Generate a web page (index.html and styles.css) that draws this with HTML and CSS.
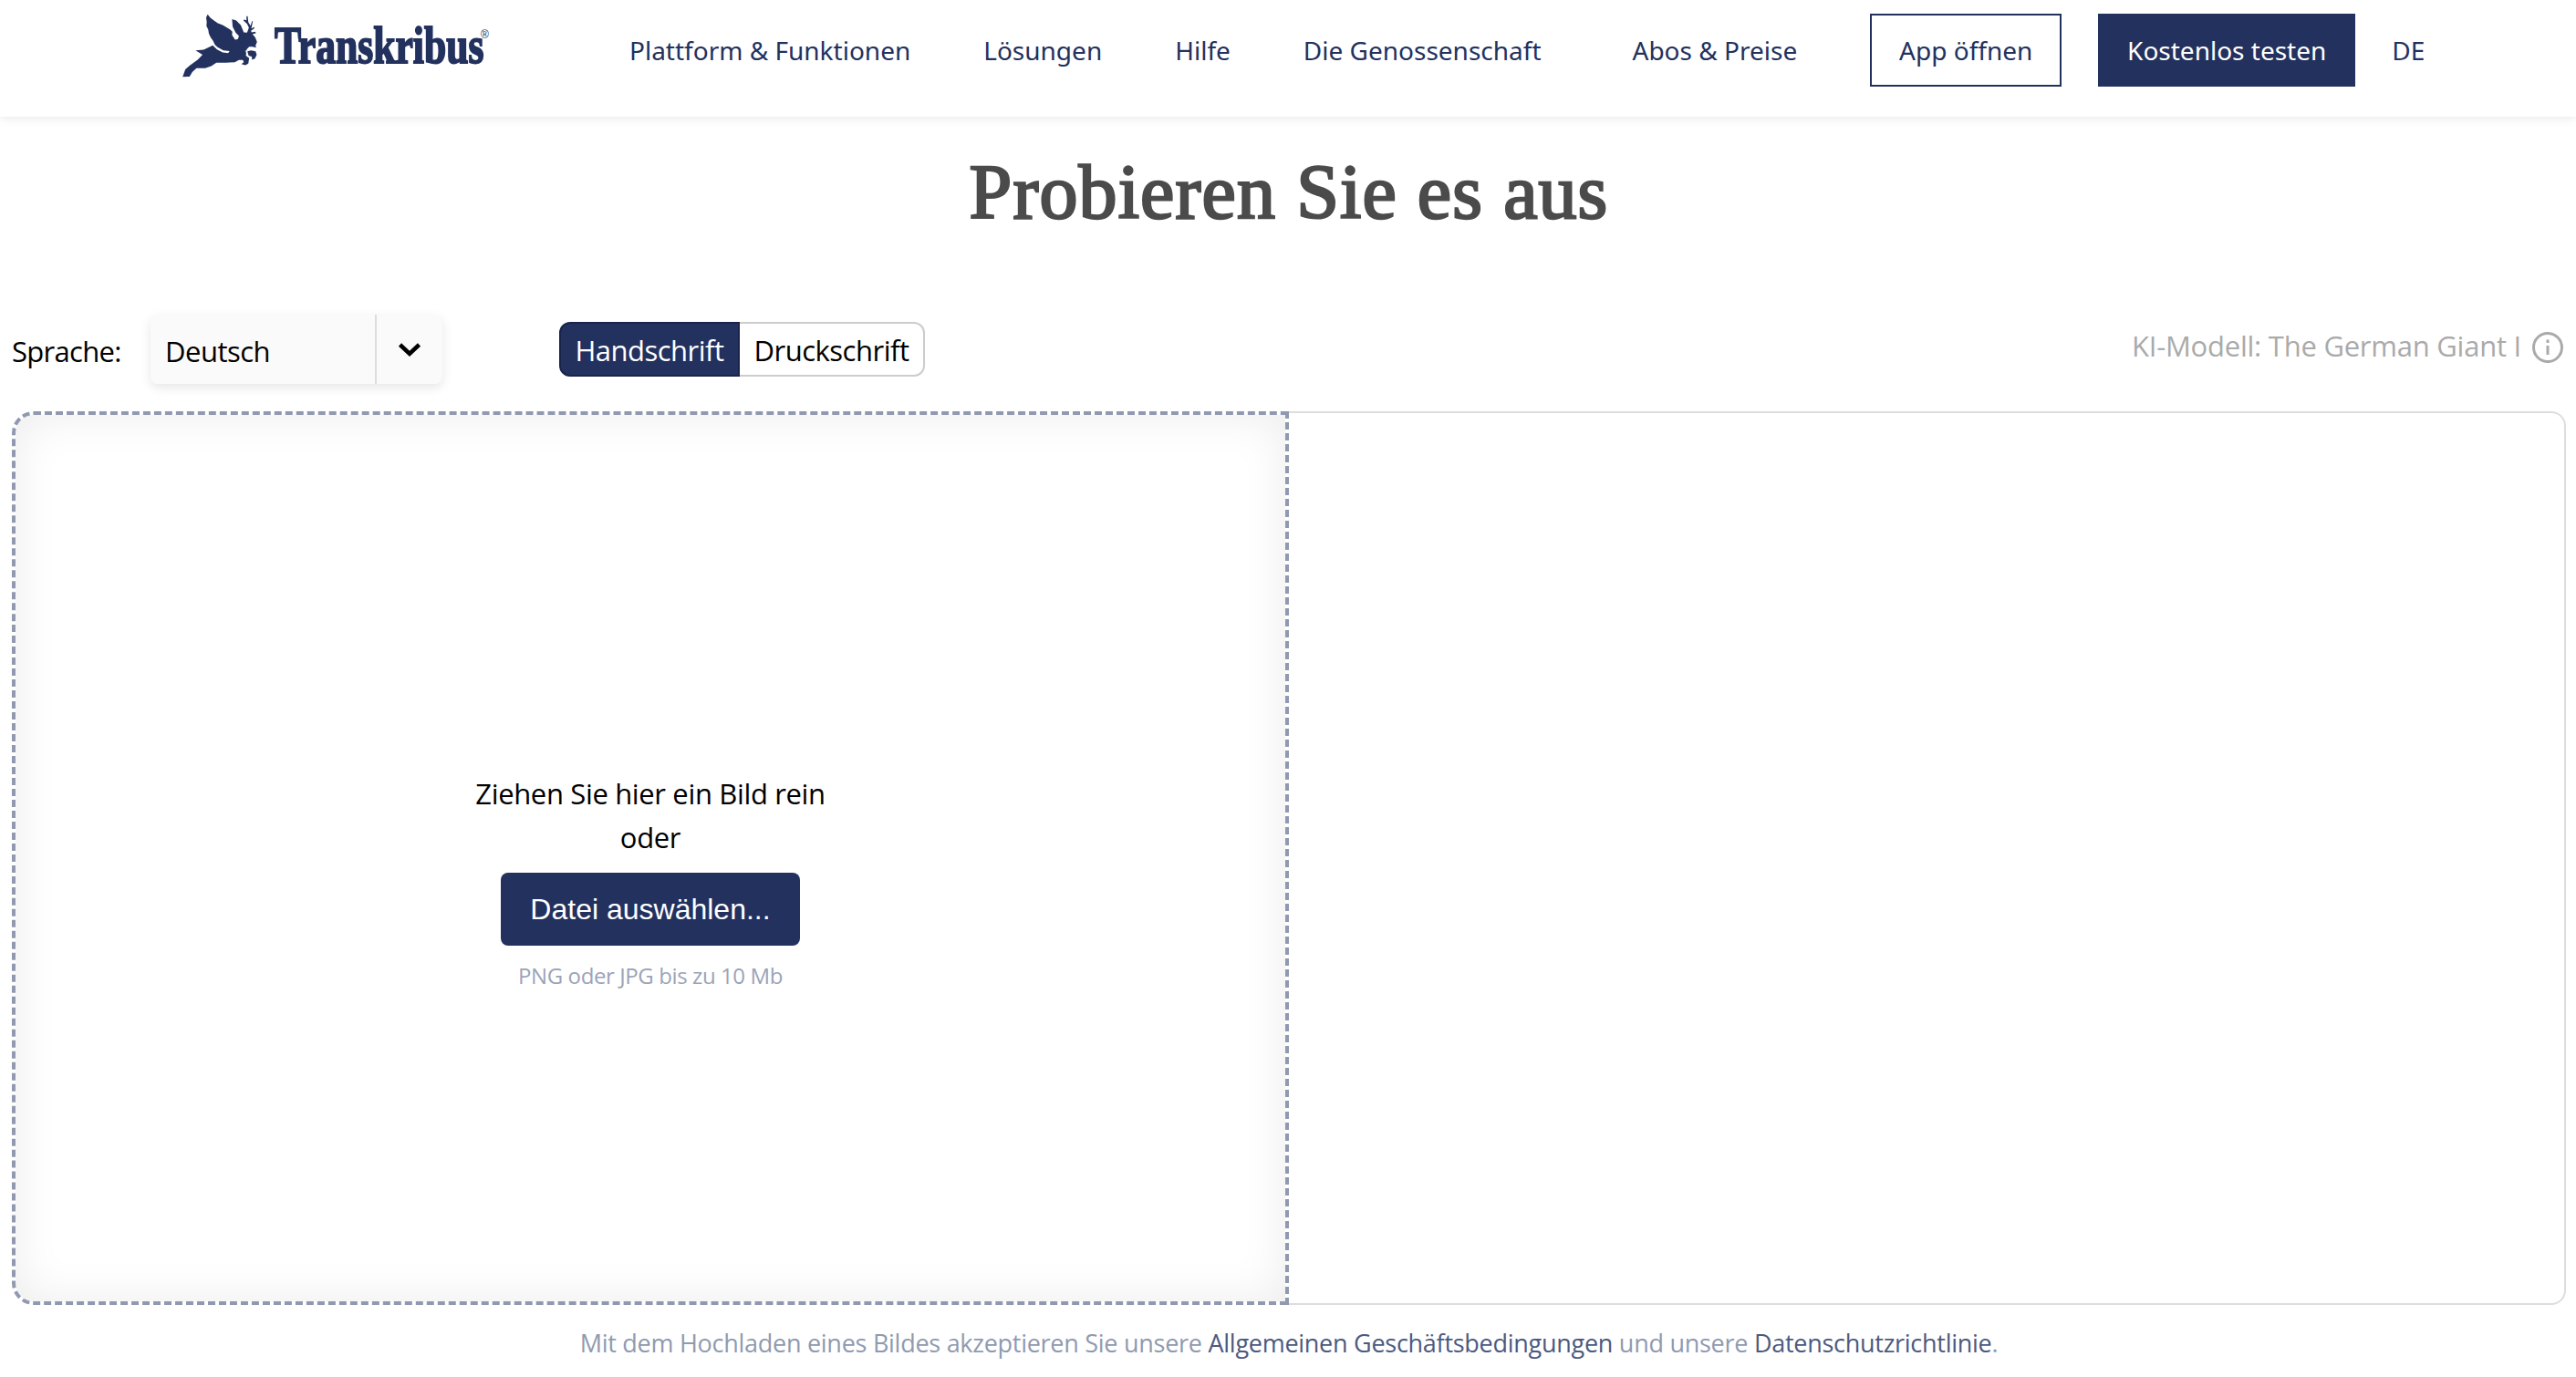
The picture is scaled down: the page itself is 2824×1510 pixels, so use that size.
FILE: index.html
```html
<!DOCTYPE html>
<html lang="de">
<head>
<meta charset="utf-8">
<title>Transkribus</title>
<link rel="stylesheet" href="styles.css">
</head>
<body>
<header class="header">
  <a class="logo">
    <svg class="logo-mark" viewBox="60 42 250 212" aria-hidden="true">
      <path d="M60 252 L69 227 L84 214 L110 195 L126 178 L103 164 L130 162 L160 147 L174 161 L193 171 L211 173 L216 166 L195 164 L176 153 L167 145 L161 132 L153 121 L147 108 L145 95 L139 83 L140 69 L138 55 L143 44 L152 56 L164 65 L177 74 L193 80 L207 88 L217 94 L225 102 L224 113 L234 128 L243 127 L247 116 L236 105 L226 85 L224 60 L238 65 L253 80 L263 104 L274 105 L280 88 L274 76 L262 65 L263 62 L272 64 L272 50 L276 50 L278 70 L285 82 L291 66 L293 67 L288 91 L297 87 L299 90 L287 99 L289 104 L300 102 L304 106 L292 110 L301 121 L307 136 L302 148 L304 155 L292 152 L281 152 L273 160 L270 181 L281 190 L278 208 L268 213 L255 209 L263 203 L260 196 L247 196 L233 203 L204 205 L172 205 L155 216 L135 223 L106 223 L92 236 L83 251 Z"/>
      <path class="logo-gap" d="M271 164 L276 182 L289 184"/>
      <path d="M275 167 L287 164 L302 167 L306 178 L300 191 L290 195 L290 185 L279 181 Z"/>
    </svg>
    <span class="logo-text">Transkribus</span><span class="logo-reg">®</span>
  </a>
  <nav class="nav">
    <a>Plattform &amp; Funktionen</a>
    <a>Lösungen</a>
    <a>Hilfe</a>
    <a class="nav-wide">Die Genossenschaft</a>
    <a>Abos &amp; Preise</a>
    <a class="btn-outline">App öffnen</a>
    <a class="btn-solid">Kostenlos testen</a>
    <a>DE</a>
  </nav>
</header>
<main class="main">
  <h1 class="title">Probieren Sie es aus</h1>
  <div class="controls">
    <span class="label">Sprache:</span>
    <div class="select">
      <span class="select-value">Deutsch</span>
      <span class="select-arrow"><svg width="26" height="18" viewBox="0 0 26 18"><path d="M2.5 4 L13 14 L23.500 4"/></svg></span>
    </div>
    <div class="toggle"><span class="toggle-on">Handschrift</span><span class="toggle-off">Druckschrift</span></div>
    <div class="model">
      <span>KI-Modell: The German Giant I</span>
      <svg width="34" height="34" viewBox="0 0 34 34"><circle cx="17" cy="17" r="15.500"/><path d="M17 15v10M17 8.500v3.500"/></svg>
    </div>
  </div>
  <div class="panels">
    <section class="drop">
      <p class="hint">Ziehen Sie hier ein Bild rein<br>oder</p>
      <button class="file">Datei auswählen...</button>
      <p class="formats">PNG oder JPG bis zu 10 Mb</p>
    </section>
    <section class="result"></section>
  </div>
  <p class="legal">Mit dem Hochladen eines Bildes akzeptieren Sie unsere <a>Allgemeinen Geschäftsbedingungen</a> und unsere <a>Datenschutzrichtlinie</a>.</p>
</main>
</body>
</html>
```
FILE: styles.css
```css
* { box-sizing: border-box; }
body { margin: 0; background: #fff; font-family: "Open Sans", sans-serif; color: #000; }
p, h1 { margin: 0; }
.header { display: flex; align-items: flex-start; height: 128px; padding: 15px 0 0 200px; color: #23315e; box-shadow: 0 0 12px rgba(0,0,0,.12); }
.logo { display: flex; width: 490px; }
.logo-mark { width: 83px; height: 70px; fill: #23315e; }
.logo-gap { fill: none; stroke: #fff; stroke-width: 5; }
.logo-text { margin-left: 18px; padding-top: 1px; width: 226px; font: bold 57px/68px "Liberation Serif", serif; transform: scaleX(.765); transform-origin: 0 0; -webkit-text-stroke: 2px #23315e; }
.logo-reg { font: 12px/20px "Liberation Sans", sans-serif; margin-top: 13px; }
.nav { display: flex; align-items: center; height: 80px; font-family: "Noto Sans", sans-serif; font-size: 28px; white-space: nowrap; gap: 80px; }
.nav-wide { margin-right: 20px; }
.btn-outline, .btn-solid { display: flex; align-items: center; justify-content: center; height: 80px; width: 210px; border: 2px solid #23315e; }
.btn-solid { width: 282px; margin: 0 -40px; background: #23315e; color: #fff; }
.main { padding: 0 11px 0 13px; }
.title { height: 217px; padding-top: 32px; text-align: center; font: 400 84px/102px "Liberation Serif", serif; letter-spacing: 1.1px; color: #4b4b4b; -webkit-text-stroke: 2.5px #4b4b4b; }
.controls { display: flex; height: 106px; font-size: 31px; line-height: 44px; letter-spacing: -.5px; white-space: nowrap; }
.label { padding-top: 18px; width: 152px; letter-spacing: -.7px; }
.select { display: flex; width: 320px; height: 76px; border-radius: 8px; background: #fafafa; box-shadow: 0 4px 12px rgba(0,0,0,.1); }
.select-value { width: 246px; padding: 18px 0 0 16px; }
.select-arrow { flex: 1; border-left: 2px solid #ddd; padding: 29px 0 0 23px; }
.select-arrow svg { display: block; }
.select-arrow path { fill: none; stroke: #000; stroke-width: 4.5; }
.toggle { display: flex; margin: 8px 0 0 128px; width: 401px; height: 60px; }
.toggle-on, .toggle-off { display: flex; justify-content: center; align-items: center; padding-top: 2px; }
.toggle-on { width: 198px; background: #23315e; color: #fff; border: 2px solid #18244b; border-radius: 12px 0 0 12px; }
.toggle-off { width: 203px; border: 2px solid #ccc; border-left: 0; border-radius: 0 12px 12px 0; }
.model { display: flex; margin-left: auto; padding: 12px 3px 0 0; gap: 12px; color: #aaa; letter-spacing: -.24px; }
.model svg { margin-top: 7px; fill: none; stroke: #aaa; stroke-width: 3; }
.panels { display: flex; height: 980px; }
.drop { width: 1400px; display: flex; flex-direction: column; align-items: center; padding-top: 391px; border: 4px dashed #9099b0; border-radius: 24px 0 0 24px; box-shadow: inset 0 0 50px rgba(0,0,0,.08); }
.hint { font-size: 31px; line-height: 48px; letter-spacing: -.35px; text-align: center; }
.file { width: 328px; height: 80px; margin-top: 15px; border: 0; border-radius: 8px; background: #23315e; color: #fff; font: 32px "Liberation Sans", sans-serif; }
.formats { font-size: 24px; line-height: 36px; letter-spacing: -.4px; margin-top: 15px; color: #9ba3b8; }
.result { flex: 1; border: 2px solid #ddd; border-left: 0; border-radius: 0 16px 16px 0; }
.legal { text-align: center; padding-top: 22px; font-size: 27px; line-height: 40px; letter-spacing: -.27px; color: #8f9ab0; }
.legal a { color: #4c5a80; }
```
